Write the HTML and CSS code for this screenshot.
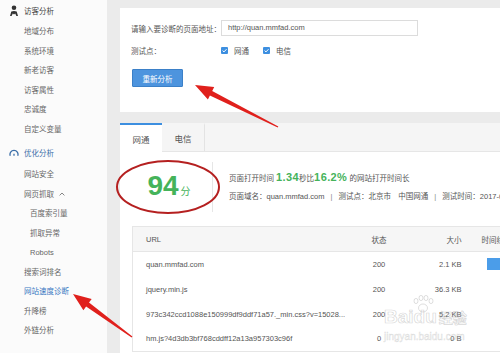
FILE: index.html
```html
<!DOCTYPE html>
<html lang="zh-CN">
<head>
<meta charset="utf-8">
<title>网站速度诊断</title>
<link rel="stylesheet" href="styles.css">
</head>
<body>
<div class="page">
  <aside class="sidebar">
    <div class="group-title">
      <svg class="gicon" viewBox="0 0 10 11" width="10" height="11"><circle cx="5" cy="2.8" r="2.3" fill="#333"/><path d="M1 11 L2.3 6.6 Q5 5.2 7.7 6.6 L9 11 L7.4 11 L6.2 8.4 L5 9.6 L3.8 8.4 L2.6 11 Z" fill="#333"/></svg>
      <span>访客分析</span>
    </div>
    <ul class="menu">
      <li>地域分布</li>
      <li>系统环境</li>
      <li>新老访客</li>
      <li>访客属性</li>
      <li>忠诚度</li>
      <li>自定义变量</li>
    </ul>
    <div class="group-title second">
      <svg class="gicon" viewBox="0 0 10 10" width="10" height="10"><path d="M1.3 8.8 A4 4 0 1 1 8.7 8.8" fill="none" stroke="#3b6ea8" stroke-width="1.3"/><path d="M5 8.8 L5 6.8" stroke="#3b6ea8" stroke-width="1.3"/></svg>
      <span class="blue-title">优化分析</span>
    </div>
    <ul class="menu">
      <li>网站安全</li>
      <li class="has-caret">网页抓取 <svg class="caret" viewBox="0 0 6 4" width="6" height="4"><path d="M0.6 3.4 L3 1 L5.4 3.4" fill="none" stroke="#777" stroke-width="0.9"/></svg></li>
      <li class="sub">百度索引量</li>
      <li class="sub">抓取异常</li>
      <li class="sub">Robots</li>
      <li>搜索词排名</li>
      <li class="current">网站速度诊断</li>
      <li>升降榜</li>
      <li>外链分析</li>
    </ul>
  </aside>

  <main class="main">
    <section class="card top-card">
      <div class="form-row">
        <span class="label">请输入要诊断的页面地址：</span>
        <div class="input">http://quan.mmfad.com</div>
      </div>
      <div class="form-row check-row">
        <span class="label">测试点：</span>
        <span class="check"><svg viewBox="0 0 7 7" width="7" height="7"><rect width="7" height="7" rx="1" fill="#3d8fe0"/><path d="M1.6 3.6 L3 4.9 L5.5 2.2" fill="none" stroke="#fff" stroke-width="1"/></svg>网通</span>
        <span class="check"><svg viewBox="0 0 7 7" width="7" height="7"><rect width="7" height="7" rx="1" fill="#3d8fe0"/><path d="M1.6 3.6 L3 4.9 L5.5 2.2" fill="none" stroke="#fff" stroke-width="1"/></svg>电信</span>
      </div>
      <button class="btn">重新分析</button>
    </section>

    <section class="card result-card">
      <div class="tabs">
        <div class="tab active">网通</div>
        <div class="tab">电信</div>
      </div>
      <div class="summary">
        <div class="score"><span class="num">94</span><span class="unit">分</span></div>
        <div class="desc">
          <p>页面打开时间 <b>1.34</b>秒比<b>16.2%</b> 的网站打开时间长</p>
          <p>页面域名：quan.mmfad.com <span class="sep">|</span> 测试点：北京市 <span class="gap"></span>中国网通 <span class="sep">|</span> 测试时间：2017-08-03</p>
        </div>
      </div>
      <table class="res-table">
        <thead>
          <tr><th class="c-url">URL</th><th class="c-st">状态</th><th class="c-size">大小</th><th class="c-time">时间线</th></tr>
        </thead>
        <tbody>
          <tr><td class="c-url">quan.mmfad.com</td><td class="c-st">200</td><td class="c-size">2.1 KB</td><td class="c-time"><span class="bar"></span></td></tr>
          <tr><td class="c-url">jquery.min.js</td><td class="c-st">200</td><td class="c-size">36.3 KB</td><td class="c-time"></td></tr>
          <tr><td class="c-url">973c342ccd1088e150999df9ddf71a57._min.css?v=15028...</td><td class="c-st">200</td><td class="c-size">5.2 KB</td><td class="c-time"></td></tr>
          <tr><td class="c-url">hm.js?4d3db3bf768cddff12a13a957303c96f</td><td class="c-st">0</td><td class="c-size">0 B</td><td class="c-time"></td></tr>
        </tbody>
      </table>
    </section>
  </main>

  <svg class="annot" viewBox="0 0 500 353" width="500" height="353">
    <ellipse cx="168" cy="187" rx="51" ry="26" fill="none" stroke="#b52020" stroke-width="2"/>
    <polygon points="278.3,126.4 212.2,90.9 214.2,86.9 195,85 207.9,99.4 209.9,95.4 277.7,127.6" fill="#e0201c"/>
    <polygon points="132.4,336.4 89.0,302.6 91.7,298.9 73,294 83.4,310.3 86.1,306.6 131.6,337.6" fill="#e0201c"/>
    <g fill="none" stroke="rgba(175,175,175,0.5)" stroke-width="0.8">
      <ellipse cx="423" cy="308" rx="4.5" ry="4"/>
      <ellipse cx="416" cy="301" rx="2" ry="2.6"/>
      <ellipse cx="421" cy="298" rx="2" ry="2.6"/>
      <ellipse cx="426" cy="298" rx="2" ry="2.6"/>
      <ellipse cx="431" cy="301" rx="2" ry="2.6"/>
    </g>
  </svg>
  <div class="watermark">
    <div class="wm-logo">Baidu<span class="wm-cn">经验</span></div>
    <div class="wm-url">jingyan.baidu.com</div>
  </div>
</div>
</body>
</html>
```

FILE: styles.css
```css
* { box-sizing: border-box; }
body {
  margin: 0;
  font-family: "Liberation Sans", "Noto Sans CJK SC", sans-serif;
  font-size: 7.5px;
  color: #555;
}
.page {
  position: relative;
  display: flex;
  width: 500px;
  height: 353px;
  overflow: hidden;
  background: #ebebeb;
}

/* sidebar */
.sidebar {
  width: 107px;
  flex: none;
  background: #fbfbfb;
}
.group-title {
  height: 20px;
  margin-bottom: 2px;
  display: flex;
  align-items: center;
  gap: 5px;
  padding-left: 9px;
  color: #444;
}
.group-title.second {
  height: 26px;
  margin-bottom: 0;
}
.blue-title { color: #3b6ea8; }
.gicon { flex: none; }
.menu {
  list-style: none;
  margin: 0;
  padding: 0;
}
.menu li {
  height: 19.5px;
  line-height: 19.5px;
  padding-left: 24px;
  color: #666;
  white-space: nowrap;
}
.menu li.sub { padding-left: 30px; }
.menu li.current { color: #3a78c2; }
.caret { margin-left: 3px; vertical-align: 1px; }

/* main */
.main {
  flex: 1;
  min-width: 0;
  display: flex;
  flex-direction: column;
  gap: 11px;
  padding: 8px 0 0 13px;
}
.card { background: #fff; }
.top-card {
  height: 104px;
  flex: none;
  padding: 12px 0 0 11px;
}
.form-row {
  display: flex;
  align-items: center;
  height: 16px;
}
.label {
  width: 90px;
  flex: none;
  color: #555;
}
.input {
  width: 197px;
  height: 16px;
  border: 1px solid #dcdcdc;
  padding-left: 6px;
  line-height: 14px;
  color: #555;
}
.check-row {
  margin-top: 6px;
}
.check {
  display: flex;
  align-items: center;
  gap: 6px;
  margin-right: 14px;
  color: #555;
}
.check svg { flex: none; }
.btn {
  display: block;
  margin: 11px 0 0 1px;
  width: 51px;
  height: 18px;
  padding: 0;
  border: 1px solid #3b80c8;
  border-radius: 1px;
  background: #4d94de;
  color: #fff;
  font-family: inherit;
  font-size: 7.5px;
}

/* result card */
.result-card {
  flex: 1;
  overflow: hidden;
}
.tabs {
  display: flex;
  height: 29px;
  background: #f5f5f5;
  border-bottom: 1px solid #e6e6e6;
}
.tab {
  width: 43px;
  display: flex;
  align-items: center;
  justify-content: center;
  font-size: 8.5px;
  color: #555;
  border-top: 2px solid transparent;
  border-right: 1px solid #e3e3e3;
}
.tab.active {
  width: 42px;
  background: #fff;
  border-top-color: #3d8fe0;
  border-right: none;
  margin-bottom: -1px;
}
.summary {
  display: flex;
  align-items: center;
  margin-top: 10px;
  height: 50px;
}
.score {
  width: 93px;
  height: 50px;
  flex: none;
  display: flex;
  align-items: baseline;
  justify-content: center;
  padding-top: 9px;
  border-right: 1px solid #e6e6e6;
  color: #45b35a;
}
.num {
  font-size: 28px;
  font-weight: bold;
  line-height: 30px;
  margin-left: 6px;
}
.unit {
  font-size: 10px;
  margin-left: 2px;
}
.desc {
  padding-left: 16px;
  white-space: nowrap;
  min-width: 0;
  overflow: hidden;
}
.desc p {
  margin: 0;
  line-height: 18px;
  color: #555;
}
.desc b {
  font-size: 11px;
  color: #45b35a;
  letter-spacing: 0.4px;
}
.sep { margin: 0 4px; color: #888; }
.gap { display: inline-block; width: 5px; }

.res-table {
  margin: 14px 0 0 12px;
  width: 430px;
  border: 1px solid #e6e6e6;
  border-collapse: collapse;
  table-layout: fixed;
  color: #555;
}
.res-table th, .res-table td {
  height: 25px;
  padding: 0;
  font-weight: normal;
  white-space: nowrap;
  overflow: hidden;
  text-align: left;
}
.res-table thead tr {
  background: #f6f6f6;
  border-bottom: 1px solid #e6e6e6;
}
.c-url { width: 225px; padding-left: 13px !important; }
.c-st { width: 43px; text-align: center !important; }
.c-size { width: 71px; text-align: right !important; padding-right: 10px !important; }
.c-time { width: 91px; padding-left: 10px !important; }
.bar {
  display: block;
  width: 40px;
  height: 12px;
  margin-left: 5px;
  background: #4b9de9;
}

/* overlays */
.annot {
  position: absolute;
  left: 0;
  top: 0;
  pointer-events: none;
}
.watermark {
  position: absolute;
  left: 384px;
  top: 307px;
  pointer-events: none;
  color: transparent;
}
.wm-logo {
  font-size: 19px;
  font-weight: bold;
  line-height: 20px;
  -webkit-text-stroke: 0.7px rgba(175, 175, 175, 0.5);
}
.wm-cn {
  font-size: 14px;
  margin-left: 2px;
}
.wm-url {
  font-size: 10px;
  line-height: 13px;
  margin-top: 2px;
  -webkit-text-stroke: 0.5px rgba(175, 175, 175, 0.45);
}
```
